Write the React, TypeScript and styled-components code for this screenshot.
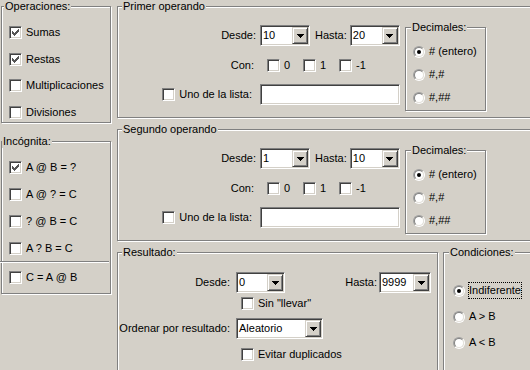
import React from 'react';
import styled, { createGlobalStyle } from 'styled-components';

const GlobalStyle = createGlobalStyle`
  html, body {
    margin: 0;
    padding: 0;
    background: #d4d0c8;
  }
  body {
    font-family: "Liberation Sans", Arial, sans-serif;
    font-size: 11px;
    color: #000;
  }
`;

const Form = styled.div`
  display: flex;
  width: 530px;
  height: 370px;
  overflow: hidden;
  background: #d4d0c8;
  font-family: "Liberation Sans", Arial, sans-serif;
  font-size: 11px;
  line-height: 13px;
  color: #000;
`;

const LeftCol = styled.div`
  display: flex;
  flex-direction: column;
  flex: none;
  width: 110px;
  margin-left: 1px;
  padding-top: 6px;
`;

const RightCol = styled.div`
  display: flex;
  flex-direction: column;
  flex: none;
  margin-left: 6px;
  padding-top: 6px;
`;

const BottomRow = styled.div`
  display: flex;
  margin-top: 11px;
`;

// etched frame of a windows group box
const GroupBox = styled.div<{ $w: number; $h: number; $mt?: number; $ml?: number }>`
  position: relative;
  box-sizing: border-box;
  flex: none;
  width: ${p => p.$w}px;
  height: ${p => p.$h}px;
  margin-top: ${p => p.$mt ?? 0}px;
  margin-left: ${p => p.$ml ?? 0}px;
  border: 1px solid #808080;
  box-shadow: inset 1px 1px 0 #fff, 1px 1px 0 #fff;
`;

const Caption = styled.span<{ $x: number }>`
  position: absolute;
  top: -7px;
  left: ${p => p.$x}px;
  padding: 0 1px;
  background: #d4d0c8;
  white-space: nowrap;
  line-height: 13px;
`;

const Stack = styled.div<{ $pt: number; $pl: number; $gap: number }>`
  display: flex;
  flex-direction: column;
  align-items: flex-start;
  padding-top: ${p => p.$pt}px;
  padding-left: ${p => p.$pl}px;
  gap: ${p => p.$gap}px;
`;

const Separator = styled.div`
  width: 109px;
  height: 0;
  margin: 6px 0 0 -2px;
  border-top: 1px solid #808080;
  border-bottom: 1px solid #fff;
`;

const Indent = styled.div<{ $mt: number; $pl: number }>`
  margin-top: ${p => p.$mt}px;
  padding-left: ${p => p.$pl}px;
`;

/* checkbox */
const CheckRow = styled.label<{ $w?: number }>`
  display: flex;
  align-items: center;
  gap: 4px;
  height: 13px;
  white-space: nowrap;
  flex: none;
  width: ${p => (p.$w ? `${p.$w}px` : 'auto')};
`;

const CheckBox = styled.span`
  flex: none;
  box-sizing: border-box;
  width: 13px;
  height: 13px;
  background: #fff;
  border: 1px solid;
  border-color: #808080 #fff #fff #808080;
  box-shadow: inset 1px 1px 0 #404040, inset -1px -1px 0 #d4d0c8;
`;

const Tick = styled.svg`
  display: block;
`;

const Check = ({ label, checked, w }: { label: string; checked?: boolean; w?: number }) => (
  <CheckRow $w={w}>
    <CheckBox>
      {checked && (
        <Tick width="11" height="11" viewBox="0 0 11 11" shapeRendering="crispEdges">
          {[2, 3, 4, 3, 2, 1, 0].map((y, i) => (
            <rect key={i} x={2 + i} y={2 + y} width="1" height="3" fill="#555" />
          ))}
        </Tick>
      )}
    </CheckBox>
    {label}
  </CheckRow>
);

/* radio */
const RadioRow = styled.label`
  display: flex;
  align-items: center;
  gap: 4px;
  height: 13px;
  white-space: nowrap;
`;

const RadioOuter = styled.span`
  flex: none;
  box-sizing: border-box;
  width: 12px;
  height: 12px;
  border-radius: 50%;
  border: 1px solid;
  border-color: #a0a0a0 #fff #fff #a0a0a0;
`;

const RadioInner = styled.span`
  box-sizing: border-box;
  display: flex;
  align-items: center;
  justify-content: center;
  width: 10px;
  height: 10px;
  border-radius: 50%;
  border: 1px solid;
  border-color: #808080 #e4e2dc #e4e2dc #808080;
  background: #fff;
`;

const RadioDot = styled.span`
  width: 4px;
  height: 4px;
  border-radius: 50%;
  background: #000;
`;

const FocusText = styled.span<{ $focus?: boolean }>`
  padding: 1px 0;
  outline: ${p => (p.$focus ? '1px dotted #000' : 'none')};
`;

const Radio = ({ label, checked, focus }: { label: string; checked?: boolean; focus?: boolean }) => (
  <RadioRow>
    <RadioOuter>
      <RadioInner>{checked && <RadioDot />}</RadioInner>
    </RadioOuter>
    <FocusText $focus={focus}>{label}</FocusText>
  </RadioRow>
);

/* combo / edit */
const Sunken = styled.div<{ $w: number; $ml?: number }>`
  box-sizing: border-box;
  display: flex;
  align-items: center;
  flex: none;
  width: ${p => p.$w}px;
  height: 21px;
  margin-left: ${p => p.$ml ?? 0}px;
  padding: 1px;
  background: #fff;
  border: 1px solid;
  border-color: #808080 #fff #fff #808080;
  box-shadow: inset 1px 1px 0 #404040, inset -1px -1px 0 #d4d0c8;
`;

const ComboText = styled.span`
  flex: 1;
  padding-left: 1px;
  white-space: nowrap;
  overflow: hidden;
`;

const DropButton = styled.span`
  box-sizing: border-box;
  display: flex;
  align-items: center;
  justify-content: center;
  flex: none;
  width: 16px;
  height: 17px;
  background: #d4d0c8;
  border: 1px solid;
  border-color: #d4d0c8 #404040 #404040 #d4d0c8;
  box-shadow: inset 1px 1px 0 #fff, inset -1px -1px 0 #808080;
`;

const Arrow = styled.svg`
  display: block;
`;

const Combo = ({ value, w, ml }: { value: string; w: number; ml?: number }) => (
  <Sunken $w={w} $ml={ml}>
    <ComboText>{value}</ComboText>
    <DropButton>
      <Arrow width="7" height="4" viewBox="0 0 7 4" shapeRendering="crispEdges">
        <rect x="0" y="0" width="7" height="1" fill="#000" />
        <rect x="1" y="1" width="5" height="1" fill="#000" />
        <rect x="2" y="2" width="3" height="1" fill="#000" />
        <rect x="3" y="3" width="1" height="1" fill="#000" />
      </Arrow>
    </DropButton>
  </Sunken>
);

/* form rows */
const OperandBody = styled.div`
  display: flex;
  align-items: flex-start;
`;

const OperandGrid = styled.div`
  display: grid;
  grid-template-columns: 138px 140px;
  grid-template-rows: 21px 22px 21px;
  column-gap: 4px;
  row-gap: 8px;
  align-items: center;
  width: 282px;
  padding-top: 18px;
`;

const FieldLabel = styled.span<{ $pr?: number; $ml?: number }>`
  justify-self: end;
  display: flex;
  white-space: nowrap;
  padding-right: ${p => p.$pr ?? 0}px;
  margin-left: ${p => p.$ml ?? 0}px;
`;

const Field = styled.div<{ $pl?: number; $between?: boolean }>`
  display: flex;
  align-items: center;
  padding-left: ${p => p.$pl ?? 0}px;
  justify-content: ${p => (p.$between ? 'space-between' : 'flex-start')};
`;

const Inline = styled.div`
  display: flex;
  align-items: center;
`;

const ResultBody = styled.div`
  display: flex;
  flex-direction: column;
  padding-top: 19px;
`;

const ResultRow = styled.div<{ $h: number; $mt?: number }>`
  display: grid;
  grid-template-columns: 113px 195px;
  column-gap: 5px;
  align-items: center;
  height: ${p => p.$h}px;
  margin-top: ${p => p.$mt ?? 0}px;
`;

const Decimales = () => (
  <GroupBox $w={81} $h={84} $mt={20} $ml={5}>
    <Caption $x={5}>Decimales:</Caption>
    <Stack $pt={17} $pl={7} $gap={10}>
      <Radio label="# (entero)" checked />
      <Radio label="#,#" />
      <Radio label="#,##" />
    </Stack>
  </GroupBox>
);

const Operand = ({ title, from, to, mt }: { title: string; from: string; to: string; mt?: number }) => (
  <GroupBox $w={420} $h={112} $mt={mt}>
    <Caption $x={4}>{title}</Caption>
    <OperandBody>
      <OperandGrid>
        <FieldLabel>Desde:</FieldLabel>
        <Field>
          <Combo value={from} w={50} />
          <FieldLabel $ml={5}>Hasta:</FieldLabel>
          <Combo value={to} w={50} ml={3} />
        </Field>
        <FieldLabel $pr={2}>Con:</FieldLabel>
        <Field $pl={7}>
          <Check label="0" w={36} />
          <Check label="1" w={36} />
          <Check label="-1" w={36} />
        </Field>
        <FieldLabel $pr={4}>
          <Check label="Uno de la lista:" />
        </FieldLabel>
        <Sunken $w={140} />
      </OperandGrid>
      <Decimales />
    </OperandBody>
  </GroupBox>
);

export default function App() {
  return (
    <Form>
      <GlobalStyle />
      <LeftCol>
        <GroupBox $w={110} $h={117}>
          <Caption $x={2}>Operaciones:</Caption>
          <Stack $pt={19} $pl={7} $gap={13.6}>
            <Check label="Sumas" checked />
            <Check label="Restas" checked />
            <Check label="Multiplicaciones" />
            <Check label="Divisiones" />
          </Stack>
        </GroupBox>
        <GroupBox $w={110} $h={153} $mt={18}>
          <Caption $x={0}>Incógnita:</Caption>
          <Stack $pt={19} $pl={7} $gap={14}>
            <Check label="A @ B = ?" checked />
            <Check label="A @ ? = C" />
            <Check label="? @ B = C" />
            <Check label="A ? B = C" />
          </Stack>
          <Separator />
          <Indent $mt={8} $pl={7}>
            <Check label="C = A @ B" />
          </Indent>
        </GroupBox>
      </LeftCol>
      <RightCol>
        <Operand title="Primer operando" from="10" to="20" />
        <Operand title="Segundo operando" from="1" to="10" mt={11} />
        <BottomRow>
          <GroupBox $w={321} $h={130}>
            <Caption $x={4}>Resultado:</Caption>
            <ResultBody>
              <ResultRow $h={21}>
                <FieldLabel $pr={1}>Desde:</FieldLabel>
                <Field $between>
                  <Combo value="0" w={49} />
                  <Inline>
                    <FieldLabel>Hasta:</FieldLabel>
                    <Combo value="9999" w={52} ml={2} />
                  </Inline>
                </Field>
              </ResultRow>
              <ResultRow $h={13} $mt={4}>
                <span />
                <Field $pl={5}>
                  <Check label={'Sin "llevar"'} />
                </Field>
              </ResultRow>
              <ResultRow $h={21} $mt={8}>
                <FieldLabel $pr={1}>Ordenar por resultado:</FieldLabel>
                <Field>
                  <Combo value="Aleatorio" w={87} />
                </Field>
              </ResultRow>
              <ResultRow $h={13} $mt={9}>
                <span />
                <Field $pl={5}>
                  <Check label="Evitar duplicados" />
                </Field>
              </ResultRow>
            </ResultBody>
          </GroupBox>
          <GroupBox $w={100} $h={130} $ml={5}>
            <Caption $x={5}>Condiciones:</Caption>
            <Stack $pt={31} $pl={9} $gap={13}>
              <Radio label="Indiferente" checked focus />
              <Radio label="A > B" />
              <Radio label="A < B" />
            </Stack>
          </GroupBox>
        </BottomRow>
      </RightCol>
    </Form>
  );
}
